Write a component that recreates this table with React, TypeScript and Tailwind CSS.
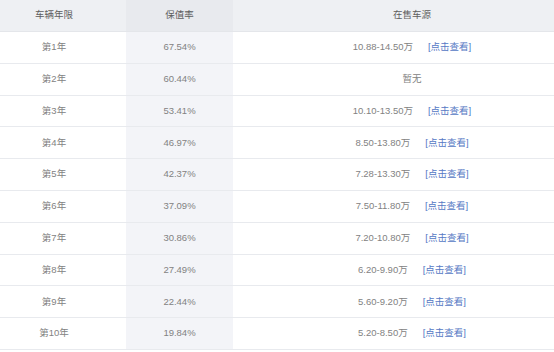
const rows = [
  { year: "第1年", rate: "67.54%", price: "10.88-14.50万" },
  { year: "第2年", rate: "60.44%", price: null },
  { year: "第3年", rate: "53.41%", price: "10.10-13.50万" },
  { year: "第4年", rate: "46.97%", price: "8.50-13.80万" },
  { year: "第5年", rate: "42.37%", price: "7.28-13.30万" },
  { year: "第6年", rate: "37.09%", price: "7.50-11.80万" },
  { year: "第7年", rate: "30.86%", price: "7.20-10.80万" },
  { year: "第8年", rate: "27.49%", price: "6.20-9.90万" },
  { year: "第9年", rate: "22.44%", price: "5.60-9.20万" },
  { year: "第10年", rate: "19.84%", price: "5.20-8.50万" },
];

export default function App() {
  return (
    <div
      className="w-[554px] h-[352px] overflow-hidden bg-white text-[9.5px] text-[#828282]"
      style={{ fontFamily: '"Liberation Sans", "Noto Sans CJK SC", sans-serif' }}
    >
      <div className="w-[609px] -ml-[18px]">
        {/* header */}
        <div className="grid grid-cols-[144px_107px_358px] h-[32px] border-b border-[#e4e6ea] bg-[#eef0f3] text-[#5e5e5e]">
          <div className="flex items-center justify-center">车辆年限</div>
          <div className="flex items-center justify-center bg-[#e8eaee]">保值率</div>
          <div className="flex items-center justify-center">在售车源</div>
        </div>
        {rows.map((r) => (
          <div
            key={r.year}
            className="grid grid-cols-[144px_107px_358px] h-[31.8px] border-b border-[#e8eaee]"
          >
            <div className="flex items-center justify-center">{r.year}</div>
            <div className="flex items-center justify-center bg-[#f3f4f8]">{r.rate}</div>
            <div className="flex items-center justify-center gap-[15px]">
              {r.price ? (
                <>
                  <span>{r.price}</span>
                  <a href="#" className="text-[#5578c4]">[点击查看]</a>
                </>
              ) : (
                <span>暂无</span>
              )}
            </div>
          </div>
        ))}
      </div>
    </div>
  );
}
